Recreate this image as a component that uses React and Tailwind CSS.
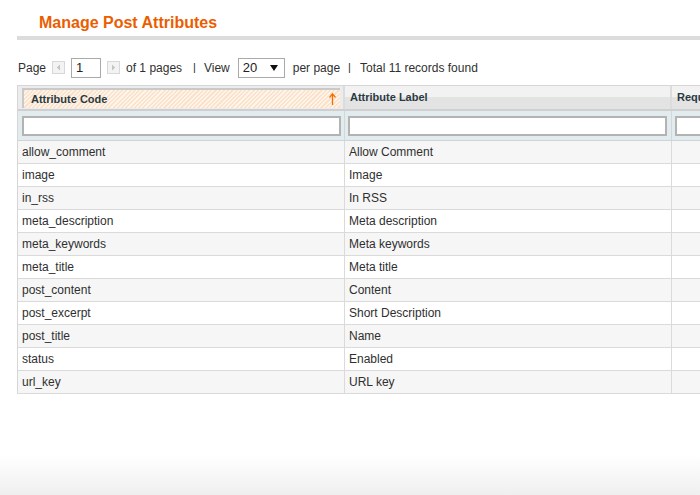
import React from "react";

const rows = [
  ["allow_comment", "Allow Comment"],
  ["image", "Image"],
  ["in_rss", "In RSS"],
  ["meta_description", "Meta description"],
  ["meta_keywords", "Meta keywords"],
  ["meta_title", "Meta title"],
  ["post_content", "Content"],
  ["post_excerpt", "Short Description"],
  ["post_title", "Name"],
  ["status", "Enabled"],
  ["url_key", "URL key"],
];

function ArrowBtn({ dir }) {
  return (
    <div className="w-[13px] h-[13px] border border-[#d8d8d8] bg-[#f3f3f3] flex items-center justify-center">
      <svg width="5" height="7" viewBox="0 0 5 7">
        {dir === "left" ? (
          <path d="M4 0.5 L0.8 3.5 L4 6.5 Z" fill="#c4c4c4" />
        ) : (
          <path d="M1 0.5 L4.2 3.5 L1 6.5 Z" fill="#c4c4c4" />
        )}
      </svg>
    </div>
  );
}

export default function App() {
  return (
    <div className="w-[700px] h-[495px] overflow-hidden flex flex-col font-['Liberation_Sans',Arial,sans-serif] text-[12px] text-[#2f2f2f] bg-[linear-gradient(to_bottom,#ffffff_0,#ffffff_455px,#efefef_495px)]">
      <div className="pt-[13px] pl-[39px] leading-[19px] text-[16px] font-bold text-[#eb5e00]">
        Manage Post Attributes
      </div>
      <div className="mt-[4px] ml-[17px] h-[4px] bg-[#dcdcdc]" />

      <div className="mt-[17px] ml-[18px] h-[21px] flex items-center whitespace-nowrap">
        <span>Page</span>
        <div className="ml-[6px]"><ArrowBtn dir="left" /></div>
        <div className="ml-[6px] w-[30px] h-[20px] border border-[#aaaaaa] bg-white flex items-center pl-[4px] text-[13px] text-[#222]">1</div>
        <div className="ml-[6px]"><ArrowBtn dir="right" /></div>
        <span className="ml-[6px]">of 1 pages</span>
        <span className="ml-[11px] text-[11px]">|</span>
        <span className="ml-[8px]">View</span>
        <div className="ml-[8px] w-[47px] h-[20px] border border-[#aaaaaa] bg-white flex items-center justify-between pl-[4px] pr-[6px] text-[13px] text-[#222]">
          <span>20</span>
          <svg width="8" height="6" viewBox="0 0 8 6"><path d="M0 0 H8 L4 6 Z" fill="#111" /></svg>
        </div>
        <span className="ml-[8px]">per page</span>
        <span className="ml-[8px] text-[11px]">|</span>
        <span className="ml-[9px]">Total 11 records found</span>
      </div>

      <div className="mt-[7px] ml-[17px] w-[760px] border-l border-t border-[#d6d6d6]">
        <div className="flex h-[25px] border-b-2 border-[#cfcfcf] bg-[linear-gradient(to_bottom,#f2f2f2_0,#f2f2f2_50%,#e3e3e3_50%,#e3e3e3_100%)]">
          <div className="w-[327px] shrink-0 border-r-2 border-[#dcdcdc] p-[2px_3px_1px_4px] bg-[#ececec]">
            <div className="h-full border-l-2 border-t-2 border-[#c9c9c9] bg-[repeating-linear-gradient(135deg,#fbe3cb_0px,#fbe3cb_1.5px,#fff4ea_1.5px,#fff4ea_3px)] flex items-center justify-between pl-[7px] pr-[4px]">
              <span className="text-[11px] font-bold text-[#2a3a42]">Attribute Code</span>
              <svg width="7" height="12" viewBox="0 0 7 12">
                <path d="M3.5 1 V12" stroke="#f26c00" strokeWidth="1.3" />
                <path d="M0.5 4.5 L3.5 0.8 L6.5 4.5" fill="none" stroke="#f26c00" strokeWidth="1.2" />
              </svg>
            </div>
          </div>
          <div className="w-[327px] shrink-0 border-r-2 border-[#dcdcdc] flex items-center pl-[5px] text-[11px] font-bold text-[#2a3a42]">
            Attribute Label
          </div>
          <div className="flex-1 flex items-center pl-[5px] text-[11px] font-bold text-[#2a3a42] overflow-hidden">
            Required
          </div>
        </div>
        <div className="flex h-[30px] bg-[#e2ebee] border-b border-[#cfd5d7]">
          <div className="w-[327px] shrink-0 border-r border-[#d2d8da] flex items-center pl-[4px] pr-[3px]">
            <div className="w-full h-[20px] border-2 border-[#b3b3b3] bg-white" />
          </div>
          <div className="w-[327px] shrink-0 border-r border-[#d2d8da] flex items-center pl-[3px] pr-[4px]">
            <div className="w-full h-[20px] border-2 border-[#b3b3b3] bg-white" />
          </div>
          <div className="flex-1 flex items-center pl-[3px]">
            <div className="w-[60px] h-[20px] border-2 border-[#b3b3b3] bg-white" />
          </div>
        </div>
        {rows.map(([code, label], i) => (
          <div
            key={code}
            className={`flex h-[23px] border-b border-[#dadada] ${i % 2 === 0 ? "bg-[#f6f6f6]" : "bg-white"}`}
          >
            <div className="w-[327px] shrink-0 border-r border-[#dadada] flex items-center pl-[4px]">{code}</div>
            <div className="w-[327px] shrink-0 border-r border-[#dadada] flex items-center pl-[4px]">{label}</div>
            <div className="flex-1" />
          </div>
        ))}
      </div>
    </div>
  );
}
